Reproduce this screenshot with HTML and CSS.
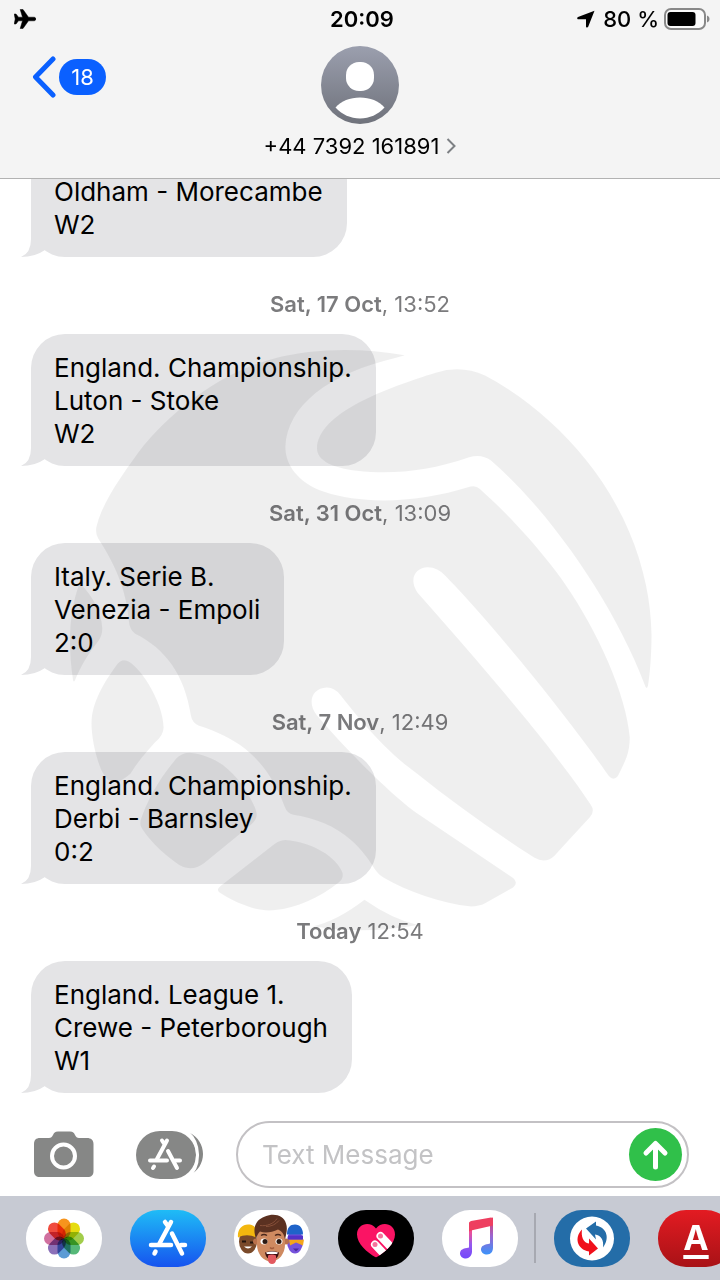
FILE: index.html
```
<!DOCTYPE html>
<html lang="en">
<head>
    <meta charset="UTF-8">
    <meta name="viewport" content="width=device-width, initial-scale=1.0">
    <title>Messages</title>
    <link rel="stylesheet" href="styles.css">
</head>
<body>
    <header class="header">
        <div class="status-bar">
            <svg class="plane" viewBox="0 0 22 20" aria-hidden="true"><path d="M22 10c0 1.200-1.200 1.800-2.500 1.800h-5L9 19.500H6.200L8.500 11.800H4.500L2 15H0.200L1.200 10 0.200 5H2l2.500 3.200h4L6.200 0.500H9l5.500 7.700h5c1.300 0 2.500.6 2.500 1.800z" stroke="#000" stroke-width=".5"/></svg>
            <span class="clock">20:09</span>
            <div class="status-right">
                <svg class="location" viewBox="0 0 18 18" aria-hidden="true"><path d="M17.500.8 11.200 16.800c-.5 1.200-2.200 1-2.200-.2V9.300H1.400C0 9.300-.2 7.600 1 7.100z"/></svg>
                <span>80 %</span>
                <svg class="battery" viewBox="0 0 46 22" aria-hidden="true">
                    <rect x="1" y="1" width="40" height="20" rx="6" fill="#fafafa" stroke="#888" stroke-width="2"/>
                    <rect x="3.500" y="4" width="28" height="14" rx="3" fill="#000"/>
                    <path d="M43 7.500c2 .8 2.500 2 2.500 3.500s-.5 2.700-2.500 3.500z" fill="#888"/>
                </svg>
            </div>
        </div>
        <nav class="nav">
            <button class="back" type="button" aria-label="Back, 18 unread">
                <svg width="24" height="42" viewBox="0 0 24 42" aria-hidden="true"><path d="M21 3 3.500 21 21 39" fill="none" stroke="#0a60ff" stroke-width="5" stroke-linecap="round" stroke-linejoin="round"/></svg>
                <span class="badge">18</span>
            </button>
            <button class="contact" type="button">
                <svg width="78" height="78" viewBox="0 0 78 78" aria-hidden="true">
                    <defs>
                        <linearGradient id="avatar" x1="0" y1="0" x2="0" y2="1"><stop offset="0" stop-color="#9b9fae"/><stop offset="1" stop-color="#6f727b"/></linearGradient>
                    </defs>
                    <circle cx="39" cy="39" r="39" fill="url(#avatar)"/>
                    <rect x="25" y="16" width="28" height="29" rx="13" fill="#fff"/>
                    <path d="M14.500 61.500C20 55 29 51.500 39 51.500s19 3.500 24.500 10C57 68.500 48.500 72.500 39 72.500s-18-4-24.500-11z" fill="#fff"/>
                </svg>
                <span class="number">+44 7392 161891
                    <svg width="10" height="16" viewBox="0 0 10 16" aria-hidden="true"><path d="M1.500 1 8.500 8 1.500 15" fill="none" stroke="#7d8084" stroke-width="2"/></svg>
                </span>
            </button>
        </nav>
    </header>

    <main class="messages">
        <p class="bubble continued">Oldham - Morecambe<br>W2</p>
        <time class="date"><b>Sat, 17 Oct</b>, 13:52</time>
        <p class="bubble">England. Championship.<br>Luton - Stoke<br>W2</p>
        <time class="date"><b>Sat, 31 Oct</b>, 13:09</time>
        <p class="bubble">Italy. Serie B.<br>Venezia - Empoli<br>2:0</p>
        <time class="date"><b>Sat, 7 Nov</b>, 12:49</time>
        <p class="bubble">England. Championship.<br>Derbi - Barnsley<br>0:2</p>
        <time class="date"><b>Today</b> 12:54</time>
        <p class="bubble">England. League 1.<br>Crewe - Peterborough<br>W1</p>

        <!-- watermark: hand holding a ball -->
        <svg class="watermark" viewBox="0 0 1568 1568" aria-hidden="true">
            <path d="M872 64C740 40 600 48 500 85 370 130 250 235 185 328 140 390 105 445 92 498Q89 515 97 528C130 580 165 640 174 735Q176 758 190 768C265 805 315 870 331 975Q334 993 350 1000C460 1035 525 1090 568 1205Q574 1222 590 1226C680 1240 745 1280 795 1362Q805 1378 820 1386C880 1420 960 1450 1040 1458Q1060 1458 1075 1450L1146 1410Q1160 1398 1146 1386L900 1220C850 1185 740 1080 650 975 625 945 635 905 675 904Q695 905 708 922C770 1000 820 1060 900 1120 1000 1200 1100 1270 1200 1335Q1228 1350 1250 1330L1340 1232Q1354 1217 1342 1200C1250 1060 1060 840 905 665 880 630 900 600 930 600Q955 600 975 622C1100 750 1300 1000 1388 1128Q1400 1142 1411 1128C1430 1090 1441 1070 1441 1030 1430 900 1330 700 1230 580 1180 515 1110 445 1062 402Q1052 392 1038 396C900 440 760 440 670 410 600 385 570 340 570 295 575 190 680 110 850 70z"/>
            <path d="M650 300C650 210 830 145 950 108Q1015 88 1075 115C1290 230 1490 470 1496 770 1496 820 1492 870 1487 900Q1483 912 1479 898C1400 690 1240 460 1090 330Q1065 312 1035 322C930 358 840 366 750 356 690 350 650 330 650 300z"/>
            <path d="M50 640C80 670 105 710 107 755Q107 772 98 785C70 820 50 855 38 886Q35 892 33 886C20 800 22 710 50 640z"/>
            <path d="M162 835C195 835 262 940 262 1005Q262 1025 240 1043C215 1070 195 1095 178 1122Q130 1165 108 1120C85 1070 78 1010 80 985 85 930 120 880 145 845Q153 835 162 835z"/>
            <path d="M328 1069C355 1070 390 1084 412 1100 450 1130 470 1160 487 1195 504 1228 500 1237 475 1258L365 1348Q328 1376 290 1345C255 1318 230 1295 208 1262Q198 1250 208 1228C230 1170 260 1125 294 1084Q308 1069 328 1069z"/>
            <path d="M571 1290C630 1295 690 1325 711 1365Q722 1384 704 1398C650 1440 590 1466 529 1468 480 1466 430 1440 402 1421Q395 1414 406 1406L540 1302Q555 1290 571 1290z"/>
            <path d="M770 1441Q700 1495 640 1508 770 1530 905 1505 840 1490 770 1441z"/>
        </svg>
    </main>

    <form class="composer">
        <button class="tool" type="button" aria-label="Camera">
            <svg width="60" height="48" viewBox="0 0 60 48" aria-hidden="true">
                <path d="M6 7h9c2 0 3-1 4-3 1-2 2-3.500 5-3.500h12c3 0 4 1.500 5 3.500s2 3 4 3h8c4 0 6.500 2 6.500 6v27c0 4-2 6-6 6H6c-4 0-6-2-6-6V13c0-4 2-6 6-6z" fill="#868786"/>
                <circle cx="29.500" cy="25" r="11.500" fill="none" stroke="#fff" stroke-width="4"/>
            </svg>
        </button>
        <button class="tool" type="button" aria-label="Apps">
            <svg width="68" height="48" viewBox="0 0 68 48" aria-hidden="true">
                <path d="M54 2c8 4 13 12 13 21s-5 17-13 21c10-12 10-30 0-42z" fill="#868786"/>
                <rect x="0" y="0" width="60" height="48" rx="24" fill="#868786"/>
                <path d="M51 1c13 10 15 34 0 46" fill="none" stroke="#fff" stroke-width="3"/>
                <g transform="translate(10 6)" fill="none" stroke="#fff" stroke-width="4" stroke-linecap="round">
                    <path d="M16 3.500 18 6.500M21 3.500 11 22"/>
                    <path d="M4 23.500H21M29 23.500H34"/>
                    <path d="M22 14 31 31"/>
                    <path d="M8 29.500 7 31"/>
                </g>
            </svg>
        </button>
        <div class="field">
            <input type="text" placeholder="Text Message" aria-label="Text Message">
            <button class="send" type="submit" aria-label="Send">
                <svg width="53" height="53" viewBox="0 0 53 53" aria-hidden="true"><path d="M26.500 39V16M17 25l9.500-9.500L36 25" fill="none" stroke="#fff" stroke-width="5" stroke-linecap="round" stroke-linejoin="round"/></svg>
            </button>
        </div>
    </form>

    <footer class="dock">
        <button class="app" type="button" aria-label="Photos">
            <svg viewBox="-38 -28 76 56" aria-hidden="true">
                <g class="petals">
                    <rect x="-6.500" y="-20" width="13" height="20" rx="6.500" fill="#f7941d"/>
                    <rect x="-6.500" y="-20" width="13" height="20" rx="6.500" fill="#e6dc10" transform="rotate(45)"/>
                    <rect x="-6.500" y="-20" width="13" height="20" rx="6.500" fill="#a2cd4a" transform="rotate(90)"/>
                    <rect x="-6.500" y="-20" width="13" height="20" rx="6.500" fill="#56b878" transform="rotate(135)"/>
                    <rect x="-6.500" y="-20" width="13" height="20" rx="6.500" fill="#5b9bd5" transform="rotate(180)"/>
                    <rect x="-6.500" y="-20" width="13" height="20" rx="6.500" fill="#8b70b8" transform="rotate(225)"/>
                    <rect x="-6.500" y="-20" width="13" height="20" rx="6.500" fill="#d0709f" transform="rotate(270)"/>
                    <rect x="-6.500" y="-20" width="13" height="20" rx="6.500" fill="#f04c3e" transform="rotate(315)"/>
                </g>
            </svg>
        </button>
        <button class="app app-store" type="button" aria-label="App Store">
            <svg viewBox="0 0 76 56" aria-hidden="true">
                <g transform="translate(17 8)" fill="none" stroke="#fff" stroke-width="4.500" stroke-linecap="round">
                    <path d="M18 3.500 20.500 7M24 3.500 12.500 25"/>
                    <path d="M4 26.500H24M34 26.500H38"/>
                    <path d="M25 15 35 35"/>
                    <path d="M8.500 33 7.500 35"/>
                </g>
            </svg>
        </button>
        <button class="app" type="button" aria-label="Memoji">
            <svg viewBox="0 0 76 56" aria-hidden="true">
                <!-- left face -->
                <ellipse cx="14" cy="31" rx="9" ry="12" fill="#7a4a2a"/>
                <path d="M4 27c-1-8 4-13 10-13s8 3 9 8l-1 5c-6-3-12-3-18 0z" fill="#f3b70f"/>
                <path d="M8 31h4M16 32h4" stroke="#23150d" stroke-width="2"/>
                <path d="M10 36q4 4 8 0z" fill="#fff"/>
                <!-- right face -->
                <ellipse cx="61" cy="31" rx="8" ry="12" fill="#7652dc"/>
                <path d="M53 24c0-7 3-10 8-10s8 4 8 10z" fill="#1f63c9"/>
                <path d="M55 29h15l-1 6-7-3-6 3z" fill="#f4a51c"/>
                <path d="M54 25h15v4H54z" fill="#5331c9"/>
                <path d="M59 38h6l-3 3z" fill="#4c2b9f"/>
                <!-- middle face -->
                <circle cx="22" cy="31" r="3" fill="#b9714b"/>
                <circle cx="52" cy="31" r="3" fill="#b9714b"/>
                <path d="M23 24c0-9 6-13 14-13s14 5 14 13v10c0 9-6 17-14 17s-14-8-14-17z" fill="#cf8a60"/>
                <path d="M22 28c-4-11 0-19 9-22 9-4 19-1 21 7 2 5 0 11-1 16-1-6-3-8-7-10-6 3-13 4-18 2-2 2-3 4-4 7z" fill="#5b3121"/>
                <path d="M26 15c7 1 14-2 17-7M32 16c5 0 10-2 13-6" fill="none" stroke="#87503a" stroke-width="1"/>
                <path d="M27 25q3-2 6 0M41 25q3-2 6 0" fill="none" stroke="#4b281c" stroke-width="1.500"/>
                <ellipse cx="30" cy="31" rx="3.500" ry="3" fill="#fff"/>
                <ellipse cx="45" cy="31" rx="3.500" ry="3" fill="#fff"/>
                <circle cx="31" cy="31" r="2.500" fill="#2b1912"/>
                <circle cx="45" cy="31" r="2.500" fill="#2b1912"/>
                <path d="M36 37q2 2 4 0" fill="none" stroke="#a35c3b" stroke-width="1.500"/>
                <path d="M31 42q7-3 14 0-1 7-7 7t-7-7z" fill="#3c0f10"/>
                <path d="M32 42q6-2 12 0l-1 1.500H33z" fill="#fff"/>
                <path d="M34 45q4-2 8 0v4c0 6-8 6-8 0z" fill="#e2595f"/>
            </svg>
        </button>
        <button class="app digital-touch" type="button" aria-label="Digital Touch">
            <svg viewBox="0 0 76 56" aria-hidden="true">
                <clipPath id="heart"><path d="M38 47C29 42 19 33 19 24c0-11 13-14 19-6 6-8 19-5 19 6 0 9-10 18-19 23z"/></clipPath>
                <g clip-path="url(#heart)">
                    <rect width="76" height="56" fill="#fa1464"/>
                    <g stroke="#fff" stroke-width="8" stroke-linecap="round"><path d="M37 34 52 50M42.500 25.500 60 44"/></g>
                    <circle cx="37" cy="34" r="2.500" fill="#f6739c"/><circle cx="42.500" cy="25.500" r="2.500" fill="#f6739c"/>
                </g>
            </svg>
        </button>
        <button class="app" type="button" aria-label="Music">
            <svg viewBox="0 0 76 56" aria-hidden="true">
                <defs>
                    <linearGradient id="note" x1="0" y1="0" x2="0" y2="1"><stop offset="0" stop-color="#fb4268"/><stop offset=".3" stop-color="#e8509c"/><stop offset=".6" stop-color="#9659ed"/><stop offset="1" stop-color="#7248fb"/></linearGradient>
                    <linearGradient id="note2" x1="0" y1="0" x2="0" y2="1"><stop offset="0" stop-color="#e13a62"/><stop offset=".5" stop-color="#9b65d0"/><stop offset="1" stop-color="#3b93fa"/></linearGradient>
                </defs>
                <path d="M27 12h3v29c0 4-3 7-6 7s-6-2-6-5c0-4 3-5 9-6z" fill="url(#note)"/>
                <path d="M48 8l3-1v30c0 4-2 7-6 7-3 0-6-2-6-5 0-4 4-5 9-6z" fill="url(#note2)"/>
                <path d="M27 13q0-2 2-2.500L49 7q2 0 2 2v6l-22 5-2 1z" fill="#ee3f60"/>
            </svg>
        </button>
        <span class="divider"></span>
        <button class="app sync" type="button" aria-label="Sync">
            <svg viewBox="0 0 76 56" aria-hidden="true">
                <circle cx="38" cy="28" r="22" fill="#fff"/>
                <path d="M32 18 42 11v4c11 2 14 13 7 22 1-8-2-12-8-13l1 5z" fill="#246da8"/>
                <path d="M44 38 35 45v-4c-12-2-15-14-7-22-1 7 1 13 7 14v-5z" fill="#f0101b"/>
            </svg>
        </button>
        <button class="app alfa" type="button">A</button>
    </footer>
</body>
</html>
```
FILE: styles.css
```
* {
    box-sizing: border-box;
}
body {
    display: flex;
    flex-direction: column;
    height: 100vh;
    margin: 0;
    overflow: hidden;
    background-color: #fff;
    color: #000;
    font-family: Inter, "Liberation Sans", sans-serif;
}
button {
    border: none;
    padding: 0;
    background: none;
    color: inherit;
    font-family: inherit;
    cursor: pointer;
}
svg {
    display: block;
    flex: none;
}

/* header */
.header {
    flex: none;
    background-color: #f4f4f4;
    border-bottom: 1px solid #b2b2b2;
}
.status-bar {
    display: grid;
    grid-template-columns: 1fr auto 1fr;
    align-items: center;
    height: 38px;
    padding: 0 10px 0 14px;
    font-size: 22px;
    font-weight: 500;
}
.plane {
    width: 22px;
    height: 20px;
}
.clock {
    font-weight: 600;
}
.status-right {
    display: flex;
    align-items: center;
    justify-content: flex-end;
    gap: 5px;
}
.location {
    width: 18px;
    height: 18px;
    margin-right: 3px;
}
.battery {
    width: 46px;
    height: 22px;
}
.nav {
    display: grid;
    grid-template-columns: 1fr auto 1fr;
    align-items: start;
    padding: 8px 32px 18px;
}
.back {
    display: flex;
    align-items: center;
    gap: 3px;
    justify-self: start;
    margin-top: 10px;
}
.badge {
    width: 47px;
    border-radius: 18px;
    background-color: #0a60ff;
    color: #fff;
    font-size: 22px;
    line-height: 36px;
}
.contact {
    display: flex;
    flex-direction: column;
    align-items: center;
    gap: 8px;
}
.number {
    display: flex;
    align-items: center;
    gap: 7px;
    font-size: 22px;
    line-height: 28px;
}

/* conversation */
.messages {
    position: relative;
    display: flex;
    flex: 1;
    flex-direction: column;
    align-items: flex-start;
    justify-content: flex-end;
    min-height: 0;
    overflow: hidden;
    padding: 0 31px;
}
.bubble {
    position: relative;
    flex: none;
    margin: 0;
    padding: 17px 24px 16px 23px;
    border-radius: 34px;
    background-color: #e4e4e6;
    font-size: 26px;
    line-height: 33px;
}
/* message whose top is scrolled under the header */
.continued {
    border-radius: 0 0 34px 34px;
}
/* tail in the bottom left corner */
.bubble::before {
    content: "";
    position: absolute;
    left: -10px;
    bottom: 0;
    width: 34px;
    height: 34px;
    background-color: #e4e4e6;
    clip-path: path("M10 0 V16 Q10 30 0 34 Q14 34 24 27 L34 0 Z");
}
.date {
    flex: none;
    align-self: center;
    margin: 35px 0 18px;
    color: #7b7b7d;
    font-size: 22px;
    line-height: 24px;
}
.date b {
    font-weight: 600;
}
.watermark {
    position: absolute;
    left: 50%;
    bottom: 143px;
    width: 620px;
    height: 620px;
    margin-left: -300px;
    fill: rgba(0, 0, 0, 0.063);
    pointer-events: none;
}

/* message box */
.composer {
    display: flex;
    flex: none;
    align-items: center;
    padding: 28px 31px 8px 34px;
}
.tool {
    margin-right: 42px;
}
.tool + .tool {
    margin-right: 32px;
}
.field {
    display: flex;
    flex: 1;
    align-items: center;
    min-width: 0;
    height: 67px;
    padding: 0 5px 0 24px;
    border: 2px solid #c3c1c4;
    border-radius: 34px;
}
.field input {
    flex: 1;
    min-width: 0;
    border: none;
    padding: 0;
    outline: none;
    background: none;
    font-family: inherit;
    font-size: 26px;
}
.field input::placeholder {
    color: #c3c3c5;
    opacity: 1;
}
.send {
    border-radius: 50%;
    background-color: #30c04a;
}

/* app strip */
.dock {
    display: flex;
    flex: none;
    align-items: center;
    height: 84px;
    padding: 0 0 0 26px;
    overflow: hidden;
    background-color: #c7cad3;
}
.app {
    flex: none;
    width: 76px;
    height: 57px;
    margin-right: 28px;
    border-radius: 28px;
    background-color: #fff;
    overflow: hidden;
}
.app svg {
    width: 76px;
    height: 57px;
}
.petals rect {
    mix-blend-mode: multiply;
}
.app-store {
    background: linear-gradient(#1fbcf6, #1653ef);
}
.digital-touch {
    background-color: #000;
}
.divider {
    flex: none;
    width: 2px;
    height: 50px;
    margin: 0 18px 0 -12px;
    background-color: #a7a9b1;
}
.sync {
    background-color: #246da8;
}
.alfa {
    background: linear-gradient(#e31b22, #a81216);
    color: #fff;
    font-size: 34px;
    font-weight: 700;
    line-height: 40px;
    text-decoration: underline;
    text-decoration-thickness: 4px;
    text-underline-offset: 5px;
}
```
